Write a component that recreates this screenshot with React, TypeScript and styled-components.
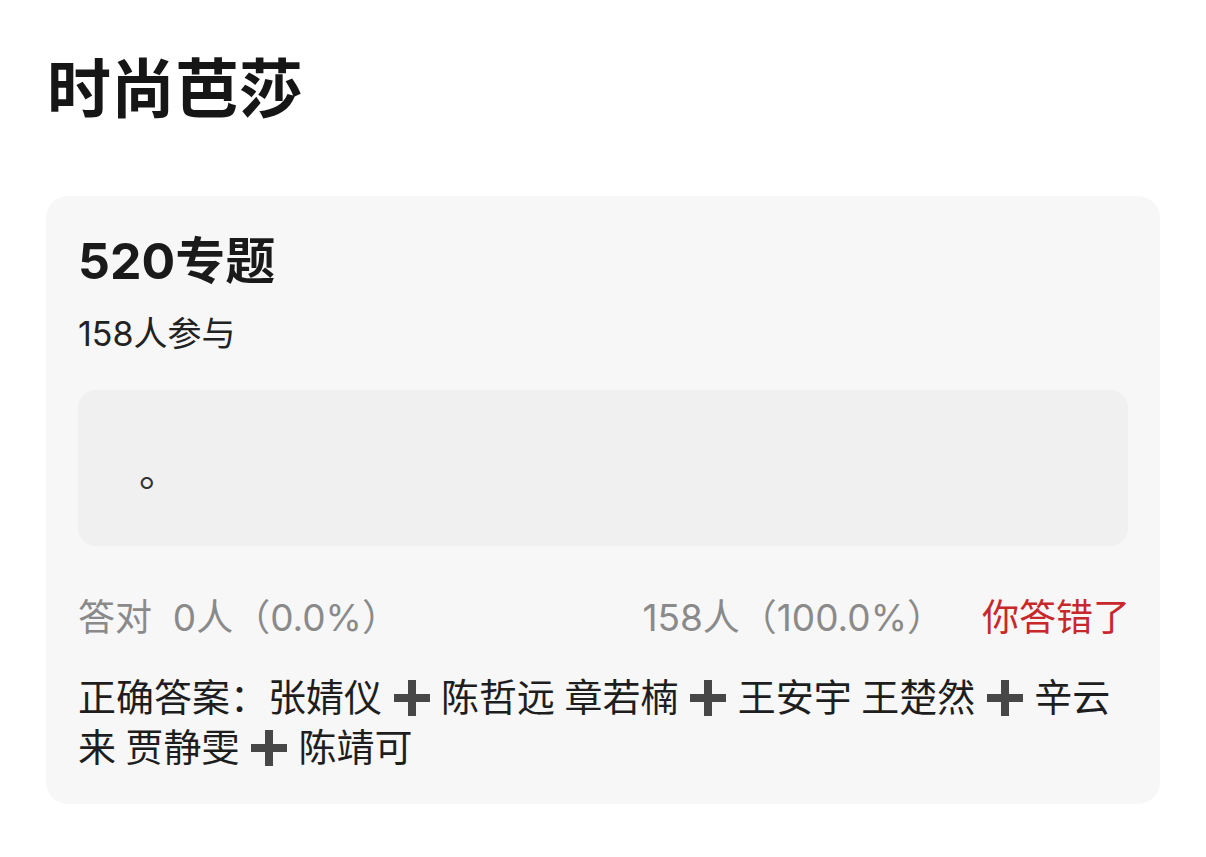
import React, { FC } from 'react';
import styled, { createGlobalStyle } from 'styled-components';

const GlobalStyle = createGlobalStyle`
  html, body {
    margin: 0;
    padding: 0;
    background: #ffffff;
  }
  body {
    font-family: "Noto Sans CJK SC", "Noto Sans", sans-serif;
    color: #1c1c1c;
  }
`;

const Page = styled.div`
  width: 1206px;
  height: 857px;
  box-sizing: border-box;
  padding: 38px 46px 0 46px;
  display: flex;
  flex-direction: column;
  overflow: hidden;
`;

const Title = styled.h1`
  margin: 0 0 0 1px;
  font-size: 64px;
  line-height: 92px;
  font-weight: 600;
  color: #161616;
`;

const Card = styled.div`
  margin-top: 66px;
  width: 1114px;
  box-sizing: border-box;
  background: #f7f7f7;
  border-radius: 22px;
  padding: 30px 32px 34px 32px;
  display: flex;
  flex-direction: column;
`;

const Topic = styled.div`
  font-size: 50px;
  line-height: 70px;
  font-weight: 700;
  color: #1a1a1a;
  font-family: "Inter", "Noto Sans CJK SC", sans-serif;
`;

const Count = styled.div`
  margin-top: 12px;
  font-size: 34px;
  line-height: 52px;
  color: #222;
  font-family: "Inter", "Noto Sans CJK SC", sans-serif;
`;

const AnswerBox = styled.div`
  margin-top: 30px;
  height: 156px;
  background: #f0f0f0;
  border-radius: 18px;
  display: flex;
  align-items: center;
  padding: 2px 0 0 61px;
  box-sizing: border-box;
  font-size: 40px;
  color: #333;
`;

const StatsRow = styled.div`
  margin-top: 46px;
  display: flex;
  align-items: center;
  justify-content: space-between;
  font-size: 37px;
  line-height: 52px;
  font-family: "Inter", "Noto Sans CJK SC", sans-serif;
`;

const Stat = styled.span<{ $tone?: 'muted' | 'wrong' }>`
  color: ${p => (p.$tone === 'wrong' ? '#c9282b' : '#8a8a8a')};
  white-space: pre;
`;

const RightGroup = styled.div`
  display: flex;
  gap: 38px;
  margin-right: -2px;
`;

const Solution = styled.div`
  margin-top: 26px;
  font-size: 38px;
  line-height: 50px;
  color: #1e1e1e;
  word-spacing: 1px;
`;

const PlusMark = styled.svg`
  display: inline-block;
  width: 38px;
  height: 38px;
  margin: 0 1px;
  vertical-align: -6px;
`;

const Plus: FC = () => (
  <PlusMark viewBox="0 0 38 38">
    <rect x="15" y="1" width="8" height="36" fill="#474747" />
    <rect x="1" y="15" width="36" height="8" fill="#474747" />
  </PlusMark>
);

const pairs: [string, string][] = [
  ['张婧仪', '陈哲远'],
  ['章若楠', '王安宇'],
  ['王楚然', '辛云来'],
  ['贾静雯', '陈靖可'],
];

const App: FC = () => (
  <>
    <GlobalStyle />
    <Page>
      <Title>时尚芭莎</Title>
      <Card>
        <Topic>520专题</Topic>
        <Count>158人参与</Count>
        <AnswerBox>。</AnswerBox>
        <StatsRow>
          <Stat $tone="muted">答对  0人（0.0%）</Stat>
          <RightGroup>
            <Stat $tone="muted">158人（100.0%）</Stat>
            <Stat $tone="wrong">你答错了</Stat>
          </RightGroup>
        </StatsRow>
        <Solution>
          正确答案：
          {pairs.map(([a, b], i) => (
            <React.Fragment key={a}>
              {i > 0 ? ' ' : ''}
              {a} <Plus /> {b}
            </React.Fragment>
          ))}
        </Solution>
      </Card>
    </Page>
  </>
);

export default App;
